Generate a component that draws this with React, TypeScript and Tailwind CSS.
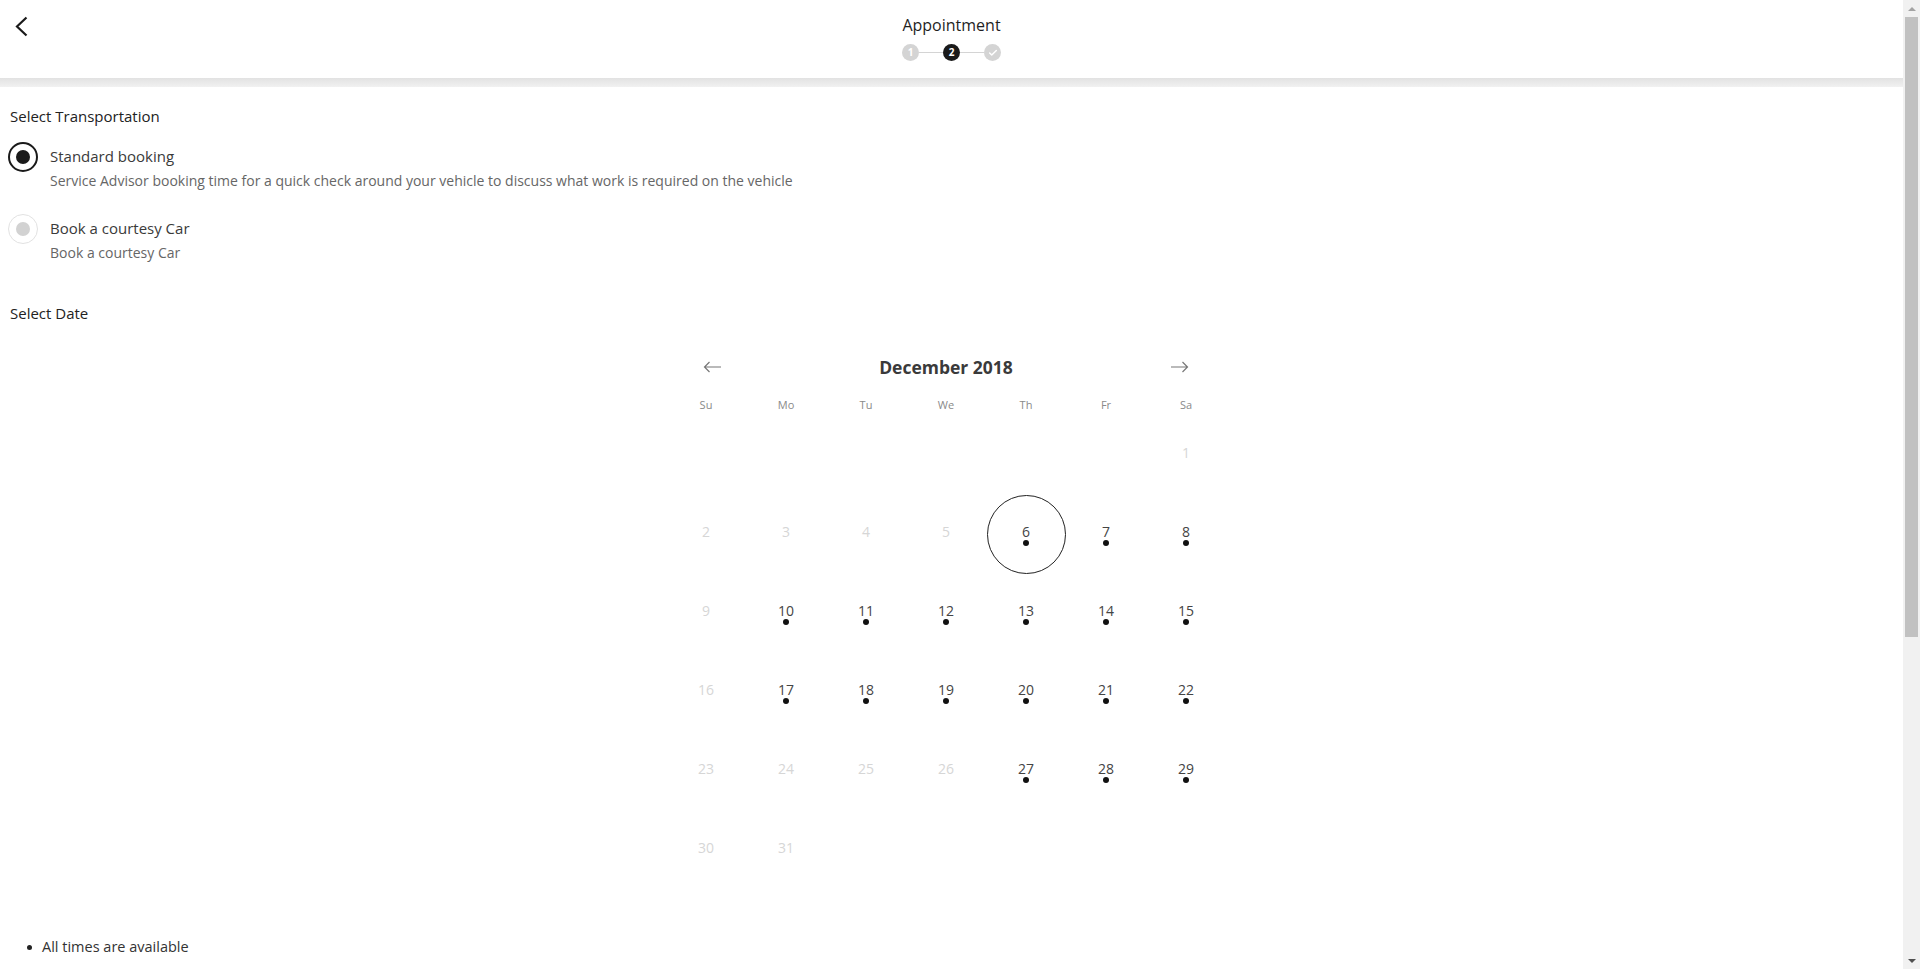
import { Check } from "lucide-react";

const weekdays = ["Su", "Mo", "Tu", "We", "Th", "Fr", "Sa"];

// december 2018 starts on saturday; only days with a dot are bookable
const available = new Set([6, 7, 8, 10, 11, 12, 13, 14, 15, 17, 18, 19, 20, 21, 22, 27, 28, 29]);
const selectedDay = 6;

const cells: (number | null)[] = [
  ...Array(6).fill(null),
  ...Array.from({ length: 31 }, (_, i) => i + 1),
];

const StepDot = ({ state, label }: { state: "done" | "active" | "todo"; label?: string }) => (
  <div
    className={`w-[17px] h-[17px] rounded-full flex items-center justify-center text-[10px] font-bold text-white ${
      state === "active" ? "bg-[#1a1a1a]" : "bg-[#d4d4d4]"
    }`}
  >
    {label ? label : <Check className="w-[10px] h-[10px]" strokeWidth={3.5} />}
  </div>
);

const Radio = ({ checked }: { checked: boolean }) => (
  <div
    className={`w-[30px] h-[30px] rounded-full flex items-center justify-center shrink-0 ${
      checked ? "border-2 border-[#1a1a1a]" : "border border-[#e2e2e2]"
    }`}
  >
    <div className={`w-[14px] h-[14px] rounded-full ${checked ? "bg-[#1a1a1a]" : "bg-[#d2d2d2]"}`} />
  </div>
);

const options = [
  {
    title: "Standard booking",
    desc: "Service Advisor booking time for a quick check around your vehicle to discuss what work is required on the vehicle",
    checked: true,
  },
  { title: "Book a courtesy Car", desc: "Book a courtesy Car", checked: false },
];

const Calendar = () => (
  <div className="w-[560px] mx-auto">
    <div className="h-[40px] flex items-center justify-between px-[37px]">
      <svg width="19" height="12" viewBox="0 0 19 12" fill="none" stroke="#777" strokeWidth="1.2">
        <path d="M18 6H1.5M6.5 1L1.5 6l5 5" />
      </svg>
      <span className="text-[17.5px] font-bold text-[#3a3a3a]">December 2018</span>
      <svg width="19" height="12" viewBox="0 0 19 12" fill="none" stroke="#777" strokeWidth="1.2">
        <path d="M1 6h16.5M12.5 1l5 5-5 5" />
      </svg>
    </div>
    <div className="grid grid-cols-7 h-[29px] items-end pb-[3px]">
      {weekdays.map((d) => (
        <div key={d} className="text-center text-[11px] text-[#8a8a8a]">
          {d}
        </div>
      ))}
    </div>
    <div className="grid grid-cols-7">
      {cells.map((day, i) => {
        const open = day !== null && available.has(day);
        return (
          <div key={i} className="h-[79px] flex items-center justify-center">
            {day !== null && (
              <div
                className={`w-[79px] h-[79px] rounded-full flex flex-col items-center justify-center ${
                  day === selectedDay ? "border-[1.5px] border-[#222]" : ""
                }`}
              >
                <span className={`text-[14px] leading-[17px] ${open ? "text-[#444]" : "text-[#d6d6d6]"}`}>{day}</span>
                <span className={`w-[6px] h-[6px] rounded-full ${open ? "bg-[#111]" : "bg-transparent"}`} />
              </div>
            )}
          </div>
        );
      })}
    </div>
  </div>
);

const Scrollbar = () => (
  <div className="w-[17px] h-full bg-[#f1f1f1] flex flex-col items-center">
    <div className="h-[17px] w-full flex items-center justify-center">
      <div className="w-0 h-0 border-l-[4px] border-r-[4px] border-b-[4px] border-l-transparent border-r-transparent border-b-[#a3a3a3]" />
    </div>
    <div className="w-[13px] h-[620px] bg-[#c1c1c1]" />
    <div className="flex-1" />
    <div className="h-[17px] w-full flex items-center justify-center">
      <div className="w-0 h-0 border-l-[4px] border-r-[4px] border-t-[4px] border-l-transparent border-r-transparent border-t-[#505050]" />
    </div>
  </div>
);

export default function App() {
  return (
    <div className="h-[969px] w-full flex overflow-hidden bg-white text-[#333]" style={{ fontFamily: '"Open Sans", "Liberation Sans", sans-serif' }}>
      <div className="flex-1 flex flex-col min-w-0">
        <header className="h-[78px] grid grid-cols-[1fr_auto_1fr]">
          <div className="pl-[15px] pt-[16px]">
            <svg width="13" height="21" viewBox="0 0 13 21" fill="none" stroke="#1a1a1a" strokeWidth="2.2">
              <path d="M11.5 1.5l-9.5 9 9.5 9" />
            </svg>
          </div>
          <div className="flex flex-col items-center pt-[14px]">
            <h1 className="text-[16px] leading-[22px] text-[#1f1f1f]">Appointment</h1>
            <div className="flex items-center mt-[8px]">
              <StepDot state="done" label="1" />
              <div className="w-[24px] h-px bg-[#d4d4d4]" />
              <StepDot state="active" label="2" />
              <div className="w-[24px] h-px bg-[#d4d4d4]" />
              <StepDot state="todo" />
            </div>
          </div>
          <div />
        </header>
        <div className="h-[9px] bg-gradient-to-b from-[#e2e2e2] to-[#f1f1f1]" />

        <main className="pl-[8px] pt-[19px]">
          <h2 className="pl-[2px] text-[15px] leading-[20px] text-[#222]">Select Transportation</h2>

          <div className="mt-[16px] flex flex-col gap-[23px]">
            {options.map((o) => (
              <label key={o.title} className="flex gap-[12px]">
                <Radio checked={o.checked} />
                <div className="pt-[3px]">
                  <div className="text-[15px] leading-[22px] text-[#3a3a3a]">{o.title}</div>
                  <div className="text-[14px] leading-[20px] mt-[4px] text-[#666]">{o.desc}</div>
                </div>
              </label>
            ))}
          </div>

          <h2 className="pl-[2px] mt-[40px] text-[15px] leading-[20px] text-[#222]">Select Date</h2>

          <div className="pr-[19px] mt-[24px]">
            <Calendar />
          </div>

          <ul className="mt-[47px] pl-[19px]">
            <li className="flex items-center gap-[10px] text-[14.5px] leading-[20px] text-[#333]">
              <span className="w-[5px] h-[5px] rounded-full bg-[#222]" />
              All times are available
            </li>
          </ul>
        </main>
      </div>
      <Scrollbar />
    </div>
  );
}
